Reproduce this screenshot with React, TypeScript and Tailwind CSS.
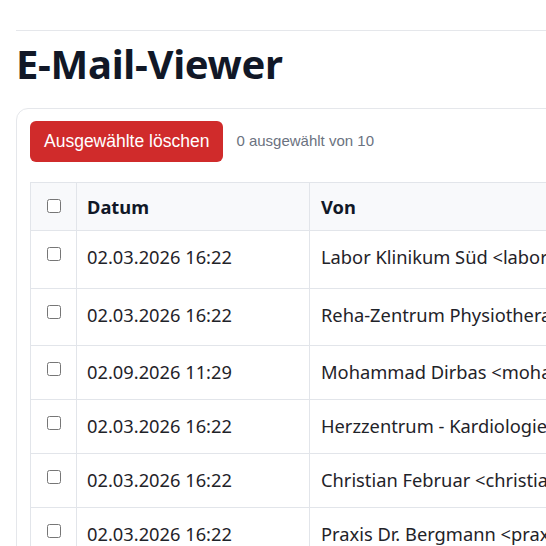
import { useState } from "react";

type Mail = {
  id: number;
  date: string;
  from: string;
  subject: string;
  tall?: boolean;
};

const mails: Mail[] = [
  { id: 1, date: "02.03.2026 16:22", from: "Labor Klinikum Süd <labor@klinikum-sued.de>", subject: "Laborbefund Blutbild", tall: true },
  { id: 2, date: "02.03.2026 16:22", from: "Reha-Zentrum Physiotherapie <info@reha-zentrum.de>", subject: "Therapieplan", tall: true },
  { id: 3, date: "02.09.2026 11:29", from: "Mohammad Dirbas <mohammad.dirbas@mail.de>", subject: "Test" },
  { id: 4, date: "02.03.2026 16:22", from: "Herzzentrum - Kardiologie <kardio@herzzentrum.de>", subject: "EKG Befund" },
  { id: 5, date: "02.03.2026 16:22", from: "Christian Februar <christian.februar@mail.de>", subject: "Termin" },
  { id: 6, date: "02.03.2026 16:22", from: "Praxis Dr. Bergmann <praxis@dr-bergmann.de>", subject: "Überweisung" },
];

export default function App() {
  const [selected, setSelected] = useState<number[]>([]);

  const toggle = (id: number) => {
    setSelected((s) => (s.includes(id) ? s.filter((x) => x !== id) : [...s, id]));
  };

  return (
    <div className="h-[546px] w-full overflow-hidden bg-white font-['Noto_Sans',sans-serif]">
      <div className="min-w-[1100px] px-4">
        {/* top divider */}
        <div className="h-[31px] border-b border-[#e5e7eb]"></div>

        <h1 className="mt-[9px] text-[40px] leading-[48px] font-bold text-[#111827] tracking-[-0.3px]">
          E-Mail-Viewer
        </h1>

        {/* card */}
        <div className="mt-5 rounded-xl border border-[#e5e7eb] bg-white pt-3 pl-[13px] pr-[13px]">
          <div className="flex items-center gap-[13px]">
            <button className="h-[41px] rounded-md bg-[#d02b2b] px-[14px] font-['Liberation_Sans',Arial,sans-serif] text-[17.5px] text-white">
              Ausgewählte löschen
            </button>
            <span className="font-['Liberation_Sans',Arial,sans-serif] text-[15px] text-[#6b7280]">
              {selected.length} ausgewählt von 10
            </span>
          </div>

          <table className="mt-5 w-full border-collapse text-[18.3px] leading-[28.8px] text-[#1f2329]">
            <thead>
              <tr className="bg-[#f8f9fb]">
                <th className="w-[46px] border border-[#e2e5ea] pt-[10px] pb-2 text-center align-top">
                  <input type="checkbox" className="m-0 mt-[6px] h-[14px] w-[14px] align-top" />
                </th>
                <th className="w-[233px] border border-[#e2e5ea] px-[10px] pt-[10px] pb-2 text-left font-bold text-[#111827]">
                  Datum
                </th>
                <th className="w-[420px] border border-[#e2e5ea] px-[11px] pt-[10px] pb-2 text-left font-bold text-[#111827]">
                  Von
                </th>
                <th className="border border-[#e2e5ea] px-[11px] pt-[10px] pb-2 text-left font-bold text-[#111827]">
                  Betreff
                </th>
              </tr>
            </thead>
            <tbody>
              {mails.map((m) => (
                <tr key={m.id}>
                  <td className={`border border-[#e2e5ea] pt-3 text-center align-top ${m.tall ? "pb-4" : "pb-3"}`}>
                    <input
                      type="checkbox"
                      checked={selected.includes(m.id)}
                      onChange={() => toggle(m.id)}
                      className="m-0 mt-[4px] h-[14px] w-[14px] align-top"
                    />
                  </td>
                  <td className={`border border-[#e2e5ea] px-[10px] pt-3 align-top whitespace-nowrap ${m.tall ? "pb-4" : "pb-3"}`}>
                    {m.date}
                  </td>
                  <td className={`border border-[#e2e5ea] px-[11px] pt-3 align-top whitespace-nowrap ${m.tall ? "pb-4" : "pb-3"}`}>
                    {m.from}
                  </td>
                  <td className={`border border-[#e2e5ea] px-[11px] pt-3 align-top whitespace-nowrap ${m.tall ? "pb-4" : "pb-3"}`}>
                    {m.subject}
                  </td>
                </tr>
              ))}
            </tbody>
          </table>
        </div>
      </div>
    </div>
  );
}
